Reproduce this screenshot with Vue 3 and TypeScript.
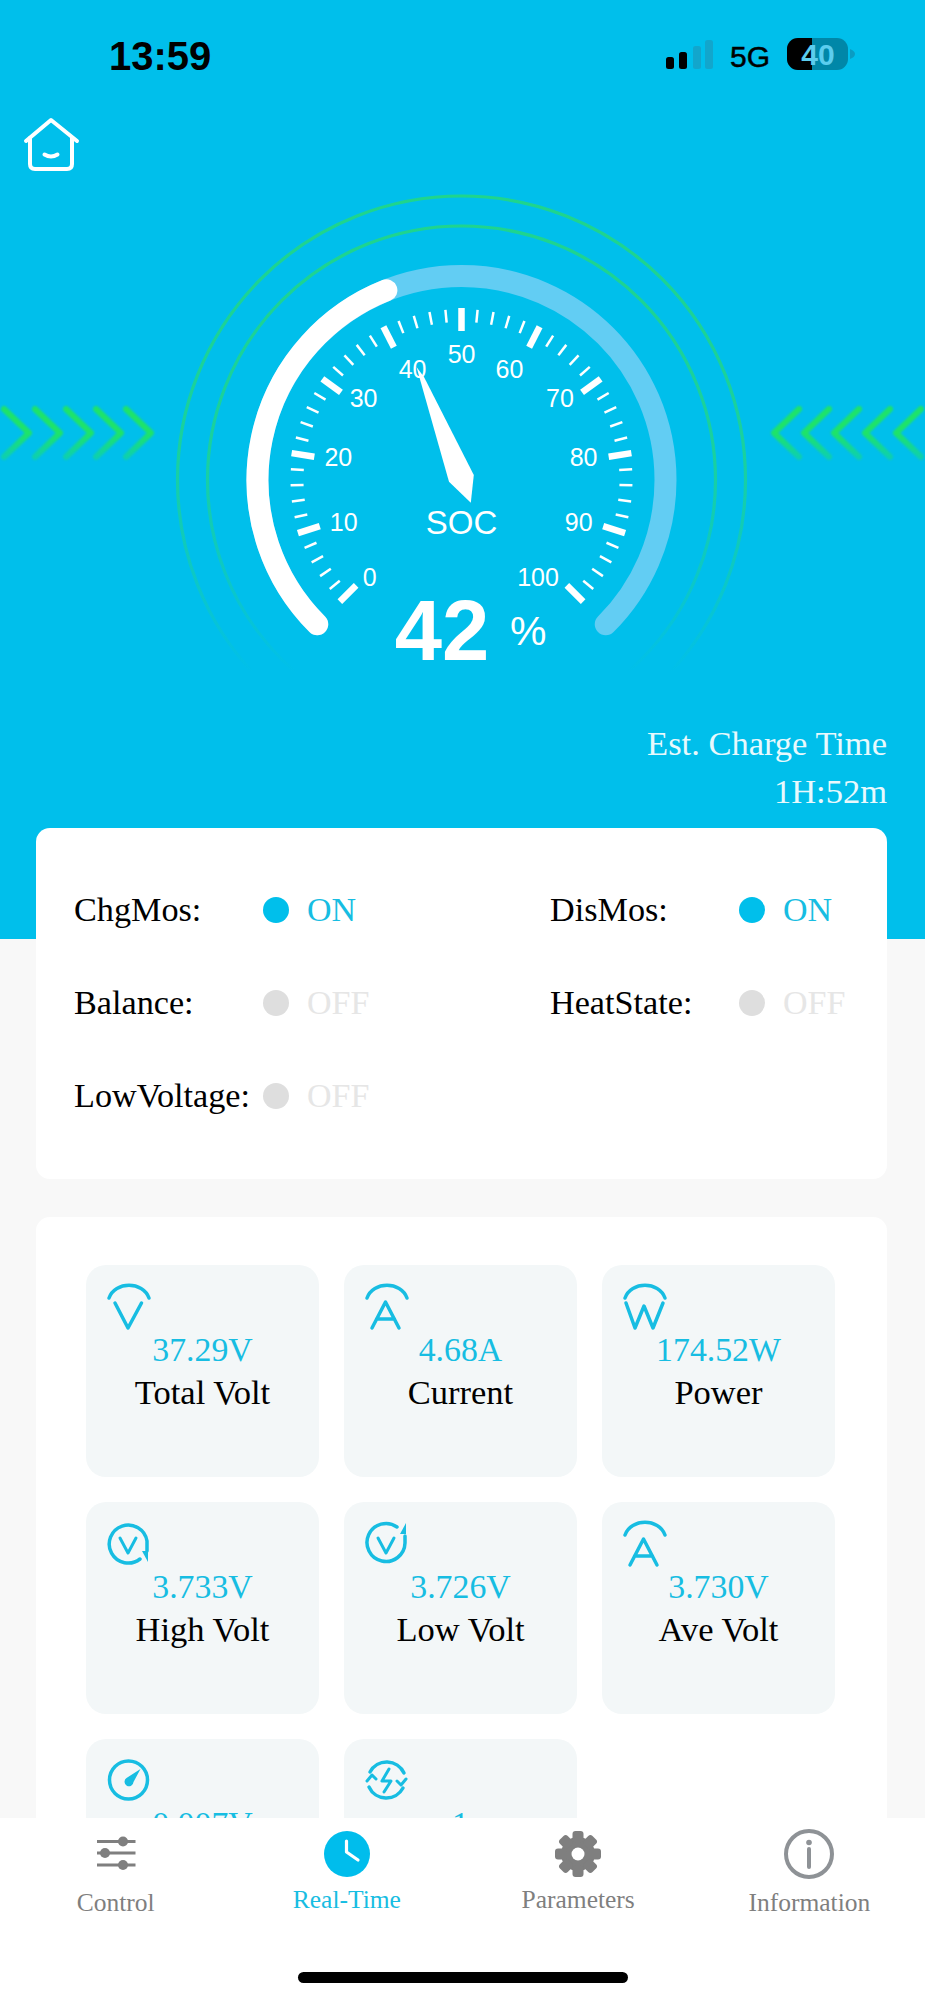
<template>
  <div class="page">
    <div class="content">
      <section class="hero">
        <div class="status-bar">
          <span class="time">13:59</span>
          <svg class="status-icons" width="200" height="38" viewBox="660 36 200 38">
            <rect x="666" y="57" width="8" height="12" rx="2.5" fill="#000" />
            <rect x="679" y="52" width="8" height="17" rx="2.5" fill="#000" />
            <rect x="693" y="46" width="8" height="23" rx="2.5" fill="#12a6cc" />
            <rect x="705" y="40" width="8" height="29" rx="2.5" fill="#12a6cc" />
            <text x="730" y="67" class="net">5G</text>
            <rect x="787" y="38" width="61" height="32" rx="11" fill="#0087a8" />
            <path d="M812 38H798a11 11 0 0 0-11 11v10a11 11 0 0 0 11 11h14z" fill="#000" />
            <path d="M850 49c3 1 5 3 5 5s-2 4-5 5z" fill="#0a9cc2" />
            <text x="818" y="65" class="batt">40</text>
          </svg>
        </div>

        <svg class="home" width="60" height="60" viewBox="20 115 60 60" fill="none" stroke="#fff" stroke-width="4" stroke-linecap="round" stroke-linejoin="round">
          <path d="M26 141 51 120 77 141" />
          <path d="M30 138V164q0 5 5 5H67q5 0 5-5V138" />
          <path d="M44.500 154.500q6.500 4 13 0" />
        </svg>

        <div class="gauge-row">
          <svg class="chevrons" width="160" height="60" viewBox="0 403 160 60">
            <path v-for="x in chevronTips" :key="x" :d="`M${x - 25} 409 L${x} 433 L${x - 25} 457`" />
          </svg>

          <svg class="gauge" width="600" height="490" viewBox="162 190 600 490">
            <defs>
              <linearGradient id="ringFade" gradientUnits="userSpaceOnUse" x1="0" y1="195" x2="0" y2="672">
                <stop offset="0" stop-color="#1fd58c" />
                <stop offset="0.55" stop-color="#1fd58c" stop-opacity="0.8" />
                <stop offset="0.8" stop-color="#1fd58c" stop-opacity="0.4" />
                <stop offset="1" stop-color="#1fd58c" stop-opacity="0" />
              </linearGradient>
              <linearGradient id="chevFade" gradientUnits="userSpaceOnUse" x1="0" y1="409" x2="0" y2="458">
                <stop offset="0" stop-color="#1ee368" />
                <stop offset="0.5" stop-color="#1ee368" />
                <stop offset="1" stop-color="#1ee368" stop-opacity="0.45" />
              </linearGradient>
            </defs>
            <circle :cx="cx" :cy="cy" r="284" class="ring" />
            <circle :cx="cx" :cy="cy" r="254" class="ring" />
            <path :d="arcPath(0, 100)" class="track" />
            <path :d="arcPath(0, soc)" class="fill" />
            <line
              v-for="t in ticks"
              :key="t.id"
              :x1="t.x1"
              :y1="t.y1"
              :x2="t.x2"
              :y2="t.y2"
              :stroke-width="t.major ? 6.500 : 2.500"
              stroke="#fff"
            />
            <text v-for="l in scaleLabels" :key="l.text" :x="l.x" :y="l.y + 8.500" class="scale">{{ l.text }}</text>
            <path d="M416.500 367 424 377 473.800 475 470.800 502.700 449 481.700z" fill="#fff" />
            <text x="461.500" y="534" class="soc">SOC</text>
            <text x="442" y="660" class="percent">{{ soc }}</text>
            <text x="510" y="645" class="unit">%</text>
          </svg>

          <svg class="chevrons flip" width="160" height="60" viewBox="0 403 160 60">
            <path v-for="x in chevronTips" :key="x" :d="`M${x - 25} 409 L${x} 433 L${x - 25} 457`" />
          </svg>
        </div>

        <div class="charge-time">
          <div>Est. Charge Time</div>
          <div>1H:52m</div>
        </div>
      </section>

      <section class="card status-card">
        <div v-for="s in switches" :key="s.label" class="switch">
          <span class="switch-label">{{ s.label }}</span>
          <span class="dot" :class="{ on: s.on }"></span>
          <span class="switch-value" :class="{ on: s.on }">{{ s.on ? 'ON' : 'OFF' }}</span>
        </div>
      </section>

      <section class="card metrics-card">
        <div v-for="m in metrics" :key="m.value" class="metric">
          <svg class="metric-icon" width="44" height="44" viewBox="0 0 44 44" fill="none" stroke="#17bde2" stroke-width="3.500" stroke-linecap="round" stroke-linejoin="round">
            <template v-if="m.icon === 'V'">
              <path d="M2 14C8-3 36-3 42 14" />
              <path d="M8 19 21 44 34.500 19" />
            </template>
            <template v-else-if="m.icon === 'A'">
              <path d="M2 14C8-3 36-3 42 14" />
              <path d="M7 44 20.500 18 34 44M11.500 35H29.500" />
            </template>
            <template v-else-if="m.icon === 'W'">
              <path d="M2 14C8-3 36-3 42 14" />
              <path d="M3 19 12 44 21 22 30 44 40 19" />
            </template>
            <template v-else-if="m.icon === 'high'">
              <path d="M33 38A19 19 0 1 1 40 20V30" />
              <path d="M13 17 21 32 29 17" stroke-width="3" />
              <path d="M35 30H41V41z" fill="#17bde2" stroke="none" />
            </template>
            <template v-else-if="m.icon === 'low'">
              <path d="M32 6A19 19 0 1 0 40 22V15" />
              <path d="M13 17 21 32 29 17" stroke-width="3" />
              <path d="M35 13 41 2V13z" fill="#17bde2" stroke="none" />
            </template>
            <template v-else-if="m.icon === 'gauge'">
              <circle cx="21.500" cy="22" r="19" />
              <path d="M33.500 11 26.500 24a4.500 4.500 0 1 1-7-4z" fill="#17bde2" stroke="none" />
            </template>
            <template v-else>
              <path d="M5 14A19 19 0 0 1 39 15" />
              <path d="M38 30A19 19 0 0 1 4 29" />
              <path d="M2 23 7 17 11 21M41 21 36 27 32 23" stroke-width="3" />
              <path d="M24 11 17 23H26L19 34" stroke-width="3" />
            </template>
          </svg>
          <div class="metric-value">{{ m.value }}</div>
          <div v-if="m.label" class="metric-label">{{ m.label }}</div>
        </div>
      </section>
    </div>

    <nav class="tabbar">
      <div class="tabs">
        <div class="tab">
          <svg width="50" height="50" viewBox="90 1829 50 50" stroke="#7f7f7f" stroke-width="3" fill="#7f7f7f">
            <path d="M96 1841.500H134.500M96 1853H134.500M96 1865H134.500" />
            <circle cx="122" cy="1841.500" r="5" stroke="none" />
            <circle cx="104" cy="1853" r="5" stroke="none" />
            <circle cx="122" cy="1865" r="5" stroke="none" />
          </svg>
          <span class="tab-label">Control</span>
        </div>
        <div class="tab">
          <svg width="50" height="50" viewBox="321 1829 50 50">
            <circle cx="346" cy="1854" r="23" fill="#00bdec" />
            <path d="M345.500 1841V1852L357 1860" fill="none" stroke="#fff" stroke-width="3.200" stroke-linecap="round" stroke-linejoin="round" />
          </svg>
          <span class="tab-label raised active">Real-Time</span>
        </div>
        <div class="tab">
          <svg width="50" height="50" viewBox="553 1829 50 50">
            <circle cx="578" cy="1854" r="17" fill="#7f7f7f" />
            <rect
              v-for="a in gearTeeth"
              :key="a"
              x="572.500"
              y="1831"
              width="11"
              height="12"
              rx="3"
              fill="#7f7f7f"
              :transform="`rotate(${a} 578 1854)`"
            />
            <circle cx="578" cy="1854" r="6.500" fill="#fff" />
          </svg>
          <span class="tab-label raised">Parameters</span>
        </div>
        <div class="tab">
          <svg width="50" height="50" viewBox="784 1829 50 50" fill="none" stroke="#8e9296">
            <circle cx="809" cy="1854" r="23" stroke-width="4" />
            <circle cx="809" cy="1842.500" r="2.800" fill="#8e9296" stroke="none" />
            <path d="M809 1849V1867" stroke-width="4" stroke-linecap="round" />
          </svg>
          <span class="tab-label">Information</span>
        </div>
      </div>
      <div class="home-bar"></div>
    </nav>
  </div>
</template>

<script setup lang="ts">
const soc = 42
const cx = 461.5
const cy = 480

// 0..100 is spread over 270 degrees, starting bottom left
const angleOf = (v: number) => ((225 - v * 2.7) * Math.PI) / 180
const polar = (v: number, r: number) => ({
  x: cx + r * Math.cos(angleOf(v)),
  y: cy - r * Math.sin(angleOf(v)),
})

const arcPath = (from: number, to: number) => {
  const a = polar(from, 204)
  const b = polar(to, 204)
  const large = (to - from) * 2.7 > 180 ? 1 : 0
  return `M${a.x} ${a.y} A204 204 0 ${large} 1 ${b.x} ${b.y}`
}

const ticks = Array.from({ length: 51 }, (_, i) => {
  const v = i * 2
  const major = i % 5 === 0
  const inner = polar(v, major ? 149 : 158)
  const outer = polar(v, major ? 172 : 171)
  return { id: v, major, x1: inner.x, y1: inner.y, x2: outer.x, y2: outer.y }
})

const scaleLabels = [
  { text: '0', x: 369.7, y: 577.7 },
  { text: '10', x: 343.7, y: 522.3 },
  { text: '20', x: 338.3, y: 457.7 },
  { text: '30', x: 363.6, y: 398.3 },
  { text: '40', x: 412.6, y: 369.3 },
  { text: '50', x: 461.6, y: 354 },
  { text: '60', x: 509.4, y: 369.3 },
  { text: '70', x: 560, y: 398.3 },
  { text: '80', x: 583.6, y: 457.7 },
  { text: '90', x: 578.7, y: 522.3 },
  { text: '100', x: 538, y: 577.7 },
]

const chevronTips = [29, 60, 91, 121, 151]
const gearTeeth = [0, 45, 90, 135, 180, 225, 270, 315]

const switches = [
  { label: 'ChgMos:', on: true },
  { label: 'DisMos:', on: true },
  { label: 'Balance:', on: false },
  { label: 'HeatState:', on: false },
  { label: 'LowVoltage:', on: false },
]

const metrics = [
  { icon: 'V', value: '37.29V', label: 'Total Volt' },
  { icon: 'A', value: '4.68A', label: 'Current' },
  { icon: 'W', value: '174.52W', label: 'Power' },
  { icon: 'high', value: '3.733V', label: 'High Volt' },
  { icon: 'low', value: '3.726V', label: 'Low Volt' },
  { icon: 'A', value: '3.730V', label: 'Ave Volt' },
  { icon: 'gauge', value: '0.007V', label: '' },
  { icon: 'bolt', value: '1', label: '' },
]
</script>

<style scoped>
.page {
  width: 925px;
  height: 2000px;
  display: flex;
  flex-direction: column;
  overflow: hidden;
  background: #f8f8f8;
  font-family: "Liberation Serif", serif;
}

.content {
  flex: 1;
  min-height: 0;
  overflow: hidden;
}

.hero {
  height: 939px;
  margin-bottom: -111px;
  background: #00bfeb;
}

.status-bar {
  height: 115px;
  box-sizing: border-box;
  padding: 36px 65px 0 109px;
  display: flex;
  justify-content: space-between;
  align-items: flex-start;
}

.time {
  font-family: "Liberation Sans", sans-serif;
  font-size: 40px;
  font-weight: 700;
  line-height: 40px;
  color: #000;
}

.status-icons {
  display: block;
}

.net {
  font-family: "Liberation Sans", sans-serif;
  font-size: 30px;
  fill: #000;
  stroke: #000;
  stroke-width: 0.5;
}

.batt {
  font-family: "Liberation Sans", sans-serif;
  font-size: 30px;
  font-weight: 700;
  fill: #5ccdee;
  text-anchor: middle;
}

.home {
  display: block;
  margin-left: 20px;
}

.gauge-row {
  margin-top: 15px;
  height: 490px;
  display: flex;
  align-items: flex-start;
}

.gauge {
  display: block;
  margin: 0 3px 0 2px;
  flex: none;
}

.chevrons {
  display: block;
  flex: none;
  margin-top: 213px;
  fill: none;
  stroke: url(#chevFade);
  stroke-width: 6;
  stroke-linecap: round;
  stroke-linejoin: round;
  filter: blur(0.8px);
}

.flip {
  transform: scaleX(-1);
}

.ring {
  fill: none;
  stroke: url(#ringFade);
  stroke-width: 3.2;
}

.track,
.fill {
  fill: none;
  stroke-width: 22;
  stroke-linecap: round;
}

.track {
  stroke: #62cdf3;
}

.fill {
  stroke: #fff;
}

.scale {
  font-family: "Liberation Sans", sans-serif;
  font-size: 25px;
  fill: #fff;
  text-anchor: middle;
}

.soc {
  font-family: "Liberation Sans", sans-serif;
  font-size: 33px;
  fill: #fff;
  text-anchor: middle;
}

.percent {
  font-family: "Liberation Sans", sans-serif;
  font-size: 85px;
  font-weight: 700;
  fill: #fff;
  text-anchor: middle;
}

.unit {
  font-family: "Liberation Sans", sans-serif;
  font-size: 41px;
  fill: #fff;
}

.charge-time {
  margin-top: 39px;
  padding-right: 38px;
  text-align: right;
  font-size: 34.5px;
  line-height: 48px;
  color: #e8f9fd;
}

.card {
  position: relative;
  margin: 0 38px 0 36px;
  background: #fff;
  border-radius: 14px;
}

.status-card {
  box-sizing: border-box;
  height: 351px;
  padding: 35px 0 0 38px;
  display: grid;
  grid-template-columns: 476px 1fr;
  grid-auto-rows: 93px;
}

.switch {
  display: flex;
  align-items: center;
}

.switch-label {
  width: 189px;
  font-size: 34.2px;
  color: #000;
  white-space: nowrap;
}

.dot {
  width: 26px;
  height: 26px;
  border-radius: 50%;
  background: #dedede;
}

.dot.on {
  background: #00bfeb;
}

.switch-value {
  margin-left: 18px;
  font-size: 34px;
  color: #e6e6e6;
}

.switch-value.on {
  color: #17bde2;
}

.metrics-card {
  margin-top: 38px;
  padding: 48px 0 40px 50px;
  display: grid;
  grid-template-columns: repeat(3, 233px);
  grid-auto-rows: 212px;
  gap: 25px 25px;
}

.metric {
  box-sizing: border-box;
  padding-top: 19px;
  background: #f3f7f8;
  border-radius: 20px;
  text-align: center;
}

.metric-icon {
  display: block;
  margin-left: 21px;
  overflow: visible;
}

.metric-value {
  margin-top: 4px;
  font-size: 33.8px;
  line-height: 36px;
  color: #17bde2;
}

.metric-label {
  margin-top: 2px;
  font-size: 34.5px;
  line-height: 44px;
  color: #000;
}

.tabbar {
  height: 182px;
  flex: none;
  box-sizing: border-box;
  padding-top: 11px;
  background: #fff;
}

.tabs {
  display: grid;
  grid-template-columns: repeat(4, 1fr);
  height: 89px;
}

.tab {
  display: flex;
  flex-direction: column;
  align-items: center;
}

.tab svg {
  display: block;
}

.tab-label {
  margin-top: 9px;
  font-size: 25.5px;
  line-height: 30px;
  color: #7f7f7f;
}

.tab-label.raised {
  margin-top: 6px;
}

.tab-label.active {
  color: #17bde2;
}

.home-bar {
  width: 330px;
  height: 11px;
  margin: 54px auto 0;
  background: #000;
  border-radius: 6px;
}
</style>
